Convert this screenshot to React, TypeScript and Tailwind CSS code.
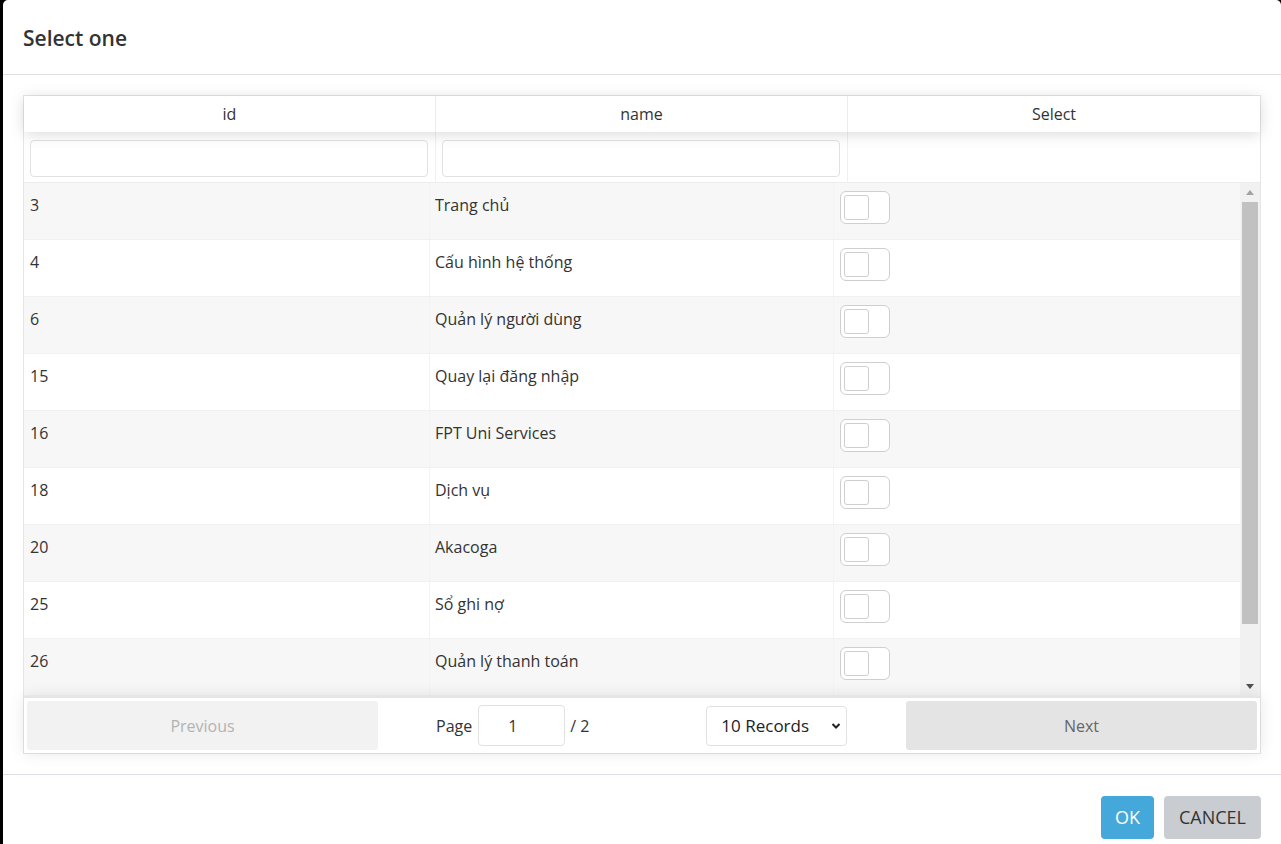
import React, { useState } from "react";

const rows = [
  { id: 3, name: "Trang chủ" },
  { id: 4, name: "Cấu hình hệ thống" },
  { id: 6, name: "Quản lý người dùng" },
  { id: 15, name: "Quay lại đăng nhập" },
  { id: 16, name: "FPT Uni Services" },
  { id: 18, name: "Dịch vụ" },
  { id: 20, name: "Akacoga" },
  { id: 25, name: "Sổ ghi nợ" },
  { id: 26, name: "Quản lý thanh toán" },
  { id: 27, name: "Báo cáo" },
];

const Toggle: React.FC<{ checked: boolean; onClick: () => void }> = ({ checked, onClick }) => (
  <button
    onClick={onClick}
    className={`w-[50px] h-[33px] rounded-[6px] border border-[#cfcfcf] bg-white flex items-start pt-[3px] pl-[3px] ${
      checked ? "justify-end pr-[3px]" : ""
    }`}
  >
    <span className="block w-[25px] h-[25px] rounded-[3px] border border-[#cfcfcf] bg-white" />
  </button>
);

export default function App() {
  const [selected, setSelected] = useState<number | null>(null);
  const [page, setPage] = useState("1");

  return (
    <div
      className="h-screen overflow-hidden bg-black pl-[3px]"
      style={{ fontFamily: '"Open Sans", "Noto Sans", sans-serif' }}
    >
      <div className="bg-white rounded-[5px] w-[1278px] h-[900px] text-[#333]">
        {/* Header */}
        <div className="h-[75px] border-b border-[#dee2e6] px-[20px] pt-[2px] flex items-center">
          <h5 className="text-[21px] font-semibold leading-[30px] text-[#333]">Select one</h5>
        </div>

        {/* Body */}
        <div className="p-[20px]">
          <div className="border border-[#e6e6e6] flex flex-col text-[16px]">
            {/* column headers */}
            <div className="relative z-10 flex h-[36px] bg-white shadow-[0_2px_15px_0_rgba(0,0,0,0.15)]">
              <div className="w-[412px] shrink-0 border-r border-[#ececec] flex items-center justify-center">id</div>
              <div className="w-[412px] shrink-0 border-r border-[#ececec] flex items-center justify-center">name</div>
              <div className="flex-1 flex items-center justify-center">Select</div>
            </div>
            {/* filters */}
            <div className="flex h-[51px] border-b border-[#ececec] bg-white">
              <div className="w-[412px] shrink-0 border-r border-[#f0f0f0] pl-[6px] pr-[7px] pt-[8px]">
                <input className="w-full h-[37px] rounded-[4px] border border-[#e1e1e1] outline-none px-[7px]" />
              </div>
              <div className="w-[412px] shrink-0 border-r border-[#f0f0f0] pl-[6px] pr-[7px] pt-[8px]">
                <input className="w-full h-[37px] rounded-[4px] border border-[#e1e1e1] outline-none px-[7px]" />
              </div>
              <div className="flex-1" />
            </div>
            {/* rows + scrollbar */}
            <div className="flex h-[513px]">
              <div className="w-[1216px] shrink-0 overflow-hidden">
                {rows.map((r, i) => (
                  <div
                    key={r.id}
                    className={`flex h-[57px] border-b border-[#f1f1f1] ${i % 2 === 0 ? "bg-[#f7f7f7]" : "bg-white"}`}
                  >
                    <div className="w-[406px] shrink-0 border-r border-[#f3f3f3] pl-[6px] pt-[10px] leading-[24px]">{r.id}</div>
                    <div className="w-[404px] shrink-0 border-r border-[#f3f3f3] pl-[5px] pt-[10px] leading-[24px]">{r.name}</div>
                    <div className="flex-1 pl-[6px] pt-[8px]">
                      <Toggle checked={selected === r.id} onClick={() => setSelected(selected === r.id ? null : r.id)} />
                    </div>
                  </div>
                ))}
              </div>
              <div className="flex-1 bg-[#f1f1f1] flex flex-col items-center">
                <div className="h-[19px] w-full flex items-center justify-center">
                  <svg width="8" height="5" viewBox="0 0 8 5">
                    <path d="M0 5 L4 0 L8 5 Z" fill="#a3a3a3" />
                  </svg>
                </div>
                <div className="w-[16px] h-[422px] bg-[#c1c1c1]" />
                <div className="flex-1" />
                <div className="h-[19px] w-full flex items-center justify-center">
                  <svg width="8" height="5" viewBox="0 0 8 5">
                    <path d="M0 0 L8 0 L4 5 Z" fill="#505050" />
                  </svg>
                </div>
              </div>
            </div>
            {/* pagination */}
            <div className="relative flex items-stretch p-[3px] border-t-2 border-[#e5e5e5] bg-white shadow-[0_0_15px_0_rgba(0,0,0,0.1)] h-[57px]">
              <button
                disabled
                className="w-[351px] rounded-[3px] bg-[#f2f2f2] text-[#b3b3b3] text-[16px]"
              >
                Previous
              </button>
              <div className="flex-1 flex items-center">
                <div className="flex items-center ml-[58px]">
                  <span>Page</span>
                  <input
                    value={page}
                    onChange={(e) => setPage(e.target.value)}
                    className="ml-[6px] w-[87px] h-[41px] rounded-[4px] border border-[#e1e1e1] outline-none pl-[29px] text-[#333]"
                  />
                  <span className="ml-[5px]">/ 2</span>
                </div>
                <div className="relative ml-[117px]">
                  <select
                    defaultValue="10"
                    className="appearance-none w-[141px] h-[40px] rounded-[4px] border border-[#e1e1e1] bg-white pl-[14px] text-[17px] text-[#222] outline-none"
                  >
                    <option value="5">5 Records</option>
                    <option value="10">10 Records</option>
                    <option value="20">20 Records</option>
                  </select>
                  <svg
                    className="absolute right-[6px] top-[16px] pointer-events-none"
                    width="10"
                    height="8"
                    viewBox="0 0 10 8"
                  >
                    <path d="M1.5 2 L5 5.5 L8.5 2" fill="none" stroke="#222" strokeWidth="2" />
                  </svg>
                </div>
              </div>
              <button className="w-[351px] rounded-[3px] bg-[#e4e4e4] text-[#666] text-[16px]">Next</button>
            </div>
          </div>
        </div>

        {/* Footer */}
        <div className="border-t border-[#dee2e6] px-[20px] pt-[21px] flex justify-end gap-[10px]">
          <button className="h-[43px] px-[14px] rounded-[4px] bg-[#45a8da] text-white text-[18px]">OK</button>
          <button className="h-[43px] px-[15px] rounded-[4px] bg-[#c9cdd1] text-[#333] text-[18px]">CANCEL</button>
        </div>
      </div>
    </div>
  );
}
